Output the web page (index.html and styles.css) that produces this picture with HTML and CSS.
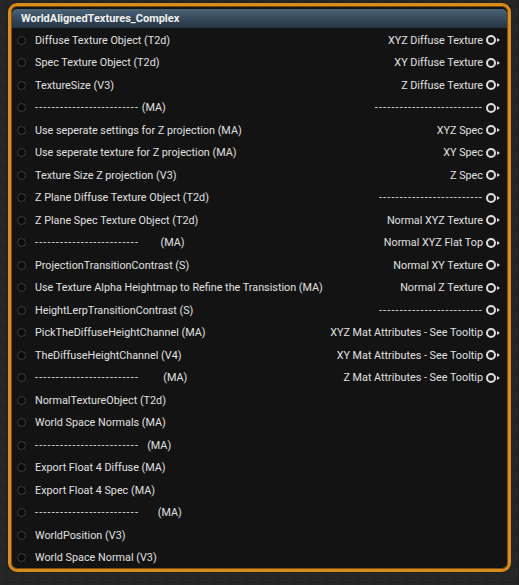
FILE: index.html
```html
<!DOCTYPE html>
<html>
<head>
<meta charset="utf-8">
<link rel="stylesheet" href="styles.css">
</head>
<body>
<div class="node">
  <div class="title">WorldAlignedTextures_Complex</div>
  <div class="rows">
    <div class="row"><div class="in"><span class="ipin"></span><span>Diffuse Texture Object (T2d)</span></div><div class="out"><span>XYZ Diffuse Texture</span><span class="opin"></span></div></div>
    <div class="row"><div class="in"><span class="ipin"></span><span>Spec Texture Object (T2d)</span></div><div class="out"><span>XY Diffuse Texture</span><span class="opin"></span></div></div>
    <div class="row"><div class="in"><span class="ipin"></span><span>TextureSize (V3)</span></div><div class="out"><span>Z Diffuse Texture</span><span class="opin"></span></div></div>
    <div class="row"><div class="in"><span class="ipin"></span><span><span class="dash">-------------------------</span> (MA)</span></div><div class="out"><span class="dash">--------------------------</span><span class="opin"></span></div></div>
    <div class="row"><div class="in"><span class="ipin"></span><span>Use seperate settings for Z projection (MA)</span></div><div class="out"><span>XYZ Spec</span><span class="opin"></span></div></div>
    <div class="row"><div class="in"><span class="ipin"></span><span>Use seperate texture for Z projection (MA)</span></div><div class="out"><span>XY Spec</span><span class="opin"></span></div></div>
    <div class="row"><div class="in"><span class="ipin"></span><span>Texture Size Z projection (V3)</span></div><div class="out"><span>Z Spec</span><span class="opin"></span></div></div>
    <div class="row"><div class="in"><span class="ipin"></span><span>Z Plane Diffuse Texture Object (T2d)</span></div><div class="out"><span class="dash">-------------------------</span><span class="opin"></span></div></div>
    <div class="row"><div class="in"><span class="ipin"></span><span>Z Plane Spec Texture Object (T2d)</span></div><div class="out"><span>Normal XYZ Texture</span><span class="opin"></span></div></div>
    <div class="row"><div class="in"><span class="ipin"></span><span><span class="dash">-------------------------</span>        (MA)</span></div><div class="out"><span>Normal XYZ Flat Top</span><span class="opin"></span></div></div>
    <div class="row"><div class="in"><span class="ipin"></span><span>ProjectionTransitionContrast (S)</span></div><div class="out"><span>Normal XY Texture</span><span class="opin"></span></div></div>
    <div class="row"><div class="in"><span class="ipin"></span><span>Use Texture Alpha Heightmap to Refine the Transistion (MA)</span></div><div class="out"><span>Normal Z Texture</span><span class="opin"></span></div></div>
    <div class="row"><div class="in"><span class="ipin"></span><span>HeightLerpTransitionContrast (S)</span></div><div class="out"><span class="dash">-------------------------</span><span class="opin"></span></div></div>
    <div class="row"><div class="in"><span class="ipin"></span><span>PickTheDiffuseHeightChannel (MA)</span></div><div class="out"><span>XYZ Mat Attributes - See Tooltip</span><span class="opin"></span></div></div>
    <div class="row"><div class="in"><span class="ipin"></span><span>TheDiffuseHeightChannel (V4)</span></div><div class="out"><span>XY Mat Attributes - See Tooltip</span><span class="opin"></span></div></div>
    <div class="row"><div class="in"><span class="ipin"></span><span><span class="dash">-------------------------</span>         (MA)</span></div><div class="out"><span>Z Mat Attributes - See Tooltip</span><span class="opin"></span></div></div>
    <div class="row"><div class="in"><span class="ipin"></span><span>NormalTextureObject (T2d)</span></div></div>
    <div class="row"><div class="in"><span class="ipin"></span><span>World Space Normals (MA)</span></div></div>
    <div class="row"><div class="in"><span class="ipin"></span><span><span class="dash">-------------------------</span>   (MA)</span></div></div>
    <div class="row"><div class="in"><span class="ipin"></span><span>Export Float 4 Diffuse (MA)</span></div></div>
    <div class="row"><div class="in"><span class="ipin"></span><span>Export Float 4 Spec (MA)</span></div></div>
    <div class="row"><div class="in"><span class="ipin"></span><span><span class="dash">-------------------------</span>       (MA)</span></div></div>
    <div class="row"><div class="in"><span class="ipin"></span><span>WorldPosition (V3)</span></div></div>
    <div class="row"><div class="in"><span class="ipin"></span><span>World Space Normal (V3)</span></div></div>
  </div>
</div>
</body>
</html>
```

FILE: styles.css
```css
html, body {
  margin: 0;
  padding: 0;
}
body {
  width: 519px;
  height: 585px;
  overflow: hidden;
  background-color: #262626;
  background-image:
    linear-gradient(to right, #1f1f1f 1px, transparent 1px),
    linear-gradient(to bottom, #1f1f1f 1px, transparent 1px);
  background-size: 16px 16px;
  background-position: 6px 6px;
  font-family: Roboto, "Liberation Sans", sans-serif;
  color: #e0e0e0;
}
.node {
  box-sizing: border-box;
  margin: 3px 0 0 8px;
  width: 503px;
  height: 569px;
  border: 3px solid #d98b1e;
  border-radius: 9px;
  background: #131313;
  padding: 3px 1px 0 1px;
  box-shadow: inset 0 0 0 1px #7a4e12, 0 0 1px #000;
}
.title {
  height: 19px;
  border-radius: 5px 5px 0 0;
  background: linear-gradient(to bottom, #4b6579 0%, #374c5d 45%, #263442 100%);
  color: #f2f2f2;
  font-weight: bold;
  font-size: 11px;
  line-height: 19px;
  padding-left: 9px;
}
.rows {
  display: grid;
  grid-auto-rows: 22.5px;
  padding-top: 0.75px;
}
.row {
  display: flex;
  justify-content: space-between;
  align-items: center;
  font-size: 10.8px;
  white-space: pre;
}
.dash {
  letter-spacing: 1.18px;
}
.in {
  display: flex;
  align-items: center;
  padding-left: 5px;
}
.ipin {
  width: 7px;
  height: 7px;
  border-radius: 50%;
  background: #0c0c0c;
  border: 1.5px solid #3c3c3c;
  margin-right: 9px;
}
.out {
  display: flex;
  align-items: center;
  padding-right: 6px;
}
.opin {
  position: relative;
  width: 6px;
  height: 6px;
  border-radius: 50%;
  border: 2px solid #dedede;
  background: #1a1a1a;
  margin-left: 3px;
  margin-right: 5px;
}
.opin::after {
  content: "";
  position: absolute;
  left: 9px;
  top: 1px;
  border-left: 3px solid #dedede;
  border-top: 2px solid transparent;
  border-bottom: 2px solid transparent;
}
```
